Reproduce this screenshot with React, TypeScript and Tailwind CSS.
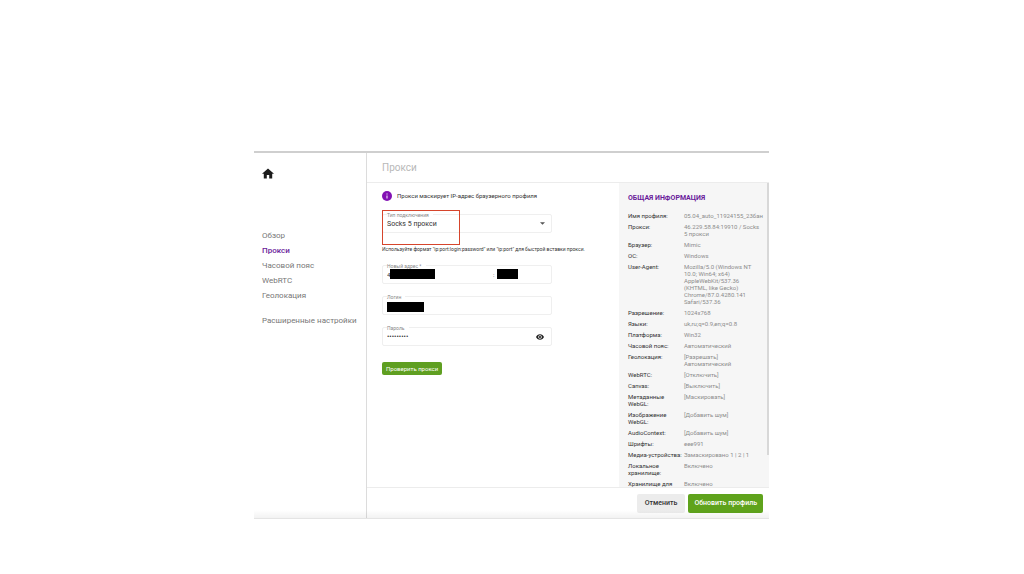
import type { ReactNode } from "react";

const navItems = ["Обзор", "Прокси", "Часовой пояс", "WebRTC", "Геолокация"];

const profileInfo = [
  { label: "Имя профиля:", value: "05.04_auto_11924155_23бан" },
  { label: "Прокси:", value: "46.229.58.84:19910 / Socks 5 прокси" },
  { label: "Браузер:", value: "Mimic" },
  { label: "ОС:", value: "Windows" },
  {
    label: "User-Agent:",
    value: "Mozilla/5.0 (Windows NT 10.0; Win64; x64) AppleWebKit/537.36 (KHTML, like Gecko) Chrome/87.0.4280.141 Safari/537.36",
  },
  { label: "Разрешение:", value: "1024x768" },
  { label: "Языки:", value: "uk,ru;q=0.9,en;q=0.8" },
  { label: "Платформа:", value: "Win32" },
  { label: "Часовой пояс:", value: "Автоматический" },
  { label: "Геолокация:", value: "[Разрешать] Автоматический" },
  { label: "WebRTC:", value: "[Отключить]" },
  { label: "Canvas:", value: "[Выключить]" },
  { label: "Метаданные WebGL:", value: "[Маскировать]" },
  { label: "Изображение WebGL:", value: "[Добавить шум]" },
  { label: "AudioContext:", value: "[Добавить шум]" },
  { label: "Шрифты:", value: "еее991" },
  { label: "Медиа-устройства:", value: "Замаскировано 1 | 2 | 1" },
  { label: "Локальное хранилище:", value: "Включено" },
  { label: "Хранилище для", value: "Включено" },
];

function HomeIcon() {
  return (
    <svg viewBox="2 3 20 17" className="h-[11px] w-3 fill-[#1c1c1c]">
      <path d="M10 20v-6h4v6h5v-8h3L12 3 2 12h3v8z" />
    </svg>
  );
}

function InfoIcon() {
  return (
    <svg viewBox="0 0 20 20" className="size-[10px] shrink-0">
      <circle cx="10" cy="10" r="10" fill="#8312b4" />
      <path d="M9 9h2v6H9zM9 5h2v2H9z" fill="#fff" />
    </svg>
  );
}

function EyeIcon() {
  return (
    <svg viewBox="1 4 22 16" className="h-[6px] w-2 fill-[#222]">
      <path d="M12 4.5C7 4.5 2.730 7.610 1 12c1.730 4.390 6 7.500 11 7.500s9.270-3.110 11-7.500c-1.730-4.390-6-7.500-11-7.500zM12 17a5 5 0 1 1 0-10 5 5 0 0 1 0 10zm0-8a3 3 0 1 0 0 6 3 3 0 0 0 0-6z" />
    </svg>
  );
}

function Field({ id, label, children }: { id: string; label: string; children: ReactNode }) {
  return (
    <div className="relative flex h-[19px] w-[170px] items-center rounded-xs border border-[#efefef] px-1">
      <label htmlFor={id} className="absolute -top-[3px] left-1 bg-white pr-1 text-[5px] leading-[6px] text-[#888]">
        {label}
      </label>
      {children}
    </div>
  );
}

function Sidebar() {
  return (
    <aside className="w-[113px] shrink-0 border-r border-[#dcdcdc] px-2 pt-[15px]">
      <a href="#home" aria-label="Главная" className="block w-3">
        <HomeIcon />
      </a>
      <nav className="mt-[49px] flex flex-col text-[8px] leading-[15px] text-[#777]">
        {navItems.map((item) => (
          <a key={item} href="#" className={item === "Прокси" ? "font-medium text-[#6a1b9a]" : ""}>
            {item}
          </a>
        ))}
        <a href="#" className="mt-[10px] whitespace-nowrap">
          Расширенные настройки
        </a>
      </nav>
    </aside>
  );
}

function ProxyForm() {
  return (
    <form className="min-w-0 flex-1 pt-2 pl-[15px] text-[6px] leading-[10px] text-[#333]">
      <p className="flex items-center gap-[5px]">
        <InfoIcon />
        Прокси маскирует IP-адрес браузерного профиля
      </p>

      <div className="relative mt-[13px]">
        <Field id="type" label="Тип подключения">
          <select id="type" className="w-full appearance-none text-[7px] leading-[10px] outline-none">
            <option>Socks 5 прокси</option>
          </select>
          <svg viewBox="0 0 10 5" className="pointer-events-none absolute right-[6px] h-[3px] w-[5px] fill-[#555]">
            <path d="M0 0h10L5 5z" />
          </svg>
        </Field>
        <span className="pointer-events-none absolute -top-1 left-0 h-[35px] w-[78px] border border-[#d6452c]" />
      </div>

      <p className="mt-[11px] text-[5px] leading-[10px] whitespace-nowrap">
        Используйте формат "ip:port:login:password" или "ip:port" для быстрой вставки прокси.
      </p>

      <div className="mt-[11px] flex flex-col gap-3">
        <Field id="address" label="Новый адрес *">
          <input id="address" defaultValue="4" className="w-[106px] text-[6px] outline-none" />
          <span>:</span>
          <input aria-label="Порт" className="w-6 outline-none" />
          <span className="absolute top-[3px] left-[7px] h-[10px] w-[45px] bg-black" />
          <span className="absolute top-[3px] left-[114px] h-[10px] w-[21px] bg-black" />
        </Field>
        <Field id="login" label="Логин">
          <input id="login" className="w-full outline-none" />
          <span className="absolute top-[5px] left-1 h-[10px] w-[37px] bg-black" />
        </Field>
        <Field id="password" label="Пароль">
          <input id="password" type="password" defaultValue="123456789" className="w-full text-[7px] text-[#333] outline-none" />
          <button type="button" aria-label="Показать пароль" className="absolute right-[7px]">
            <EyeIcon />
          </button>
        </Field>
      </div>

      <button type="button" className="mt-4 h-[13px] rounded-xs bg-[#5f9f21] px-1 text-white">
        Проверить прокси
      </button>
    </form>
  );
}

function InfoPanel() {
  return (
    <aside className="relative w-[150px] shrink-0 overflow-hidden bg-[#f6f6f6] px-[9px] pt-[10px]">
      <h2 className="text-[7px] leading-[10px] font-bold text-[#6a1b9a]">ОБЩАЯ ИНФОРМАЦИЯ</h2>
      <dl className="mt-[9px] flex flex-col gap-1 text-[6px] leading-[7px]">
        {profileInfo.map(({ label, value }) => (
          <div key={label} className="flex">
            <dt className="w-[56px] shrink-0 pr-px text-[#333]">{label}</dt>
            <dd className="w-[76px] shrink-0 text-[#8c8c8c]">{value}</dd>
          </div>
        ))}
      </dl>
      <span className="absolute top-0 right-0 h-[272px] w-[2px] bg-[#d8d8d8]" />
    </aside>
  );
}

export default function App() {
  return (
    <div className="flex h-screen bg-white pt-[151px] pr-[255px] pb-[55px] pl-[254px] font-['Roboto','Liberation_Sans',sans-serif] antialiased">
      <div className="relative flex min-w-0 flex-1 border-t-2 border-b border-t-[#cfcfcf] border-b-[#e4e4e4]">
        <Sidebar />
        <main className="flex min-w-0 flex-1 flex-col">
          <header className="flex h-[30px] shrink-0 items-center border-b border-[#ececec] px-[15px]">
            <h1 className="text-[10px] leading-3 text-[#b8b8b8]">Прокси</h1>
          </header>
          <div className="flex min-h-0 flex-1">
            <ProxyForm />
            <InfoPanel />
          </div>
          <footer className="flex h-[31px] shrink-0 items-center justify-end gap-[3px] border-t border-[#ececec] pr-[6px] text-[7px]">
            <button type="button" className="h-[19px] rounded-xs bg-[#ececec] px-2 font-medium text-[#333]">
              Отменить
            </button>
            <button type="button" className="h-[19px] rounded-xs bg-[#5fa31c] px-[6px] font-medium text-white">
              Обновить профиль
            </button>
          </footer>
        </main>
        <span className="pointer-events-none absolute inset-x-0 bottom-0 h-2 bg-linear-to-b from-black/0 to-black/5" />
      </div>
    </div>
  );
}
